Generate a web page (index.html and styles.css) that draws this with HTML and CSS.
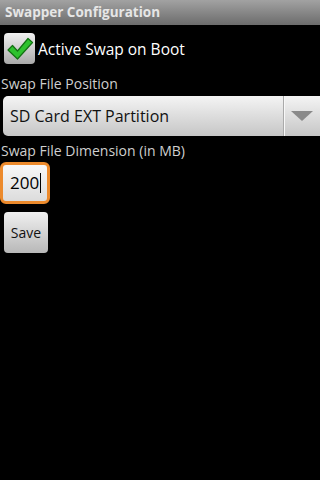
FILE: index.html
```html
<!DOCTYPE html>
<html lang="en">
<head>
    <meta charset="UTF-8">
    <meta name="viewport" content="width=device-width, initial-scale=1.0">
    <title>Swapper Configuration</title>
    <link rel="stylesheet" href="styles.css">
</head>
<body>
    <div class="titlebar">Swapper Configuration</div>
    <div class="content">
        <!-- Active swap on boot -->
        <div class="check-row">
            <span class="checkbox">
                <svg width="28" height="26" viewBox="0 0 28 26">
                    <path d="M2 14 L6.5 9.5 L11.5 15 L22 2.5 L26.5 6.5 L11.5 23 Z" fill="#2ec22e" stroke="#127012" stroke-width="1.2" stroke-linejoin="round"/>
                </svg>
            </span>
            <span class="check-label">Active Swap on Boot</span>
        </div>

        <!-- Swap file position -->
        <div class="field-label">Swap File Position</div>
        <div class="spinner">
            <span class="spinner-text">SD Card EXT Partition</span>
            <span class="spinner-arrow"><span class="triangle"></span></span>
        </div>

        <!-- Swap file dimension -->
        <div class="field-label">Swap File Dimension (in MB)</div>
        <div class="edit">200<span class="cursor"></span></div>

        <button class="save">Save</button>
    </div>
</body>
</html>
```

FILE: styles.css
```css
body {
    margin: 0;
    background-color: #000;
    font-family: "Open Sans", "DejaVu Sans", sans-serif;
    color: #fff;
}
.titlebar {
    height: 25px;
    line-height: 25px;
    padding-left: 5px;
    background: linear-gradient(#a2a2a2, #6c6c6c);
    color: #e6e6e6;
    font-weight: bold;
    font-size: 13.5px;
}
.content {
    padding: 8px 0 0 0;
}
.check-row {
    display: flex;
    align-items: center;
    height: 31px;
    padding-left: 4px;
}
.checkbox {
    width: 31px;
    height: 31px;
    box-sizing: border-box;
    border-radius: 4px;
    background: linear-gradient(#f2f2f2, #a9a9a9);
    display: flex;
    align-items: center;
    justify-content: center;
}
.check-label {
    margin-left: 3px;
    font-size: 15.5px;
}
.field-label {
    margin: 11px 0 0 1px;
    font-size: 14px;
    color: #cfcfcf;
    line-height: 18px;
}
.spinner {
    display: flex;
    align-items: center;
    height: 40px;
    margin: 3px -6px 0 3px;
    border-radius: 5px;
    background: linear-gradient(#f4f4f4, #c6c6c6);
    color: #111;
}
.spinner-text {
    flex: 1;
    padding-left: 7px;
    font-size: 16px;
}
.spinner-arrow {
    width: 43px;
    height: 100%;
    border-left: 1px solid #aaa;
    box-shadow: inset 1px 0 0 #f8f8f8;
    display: flex;
    align-items: center;
    padding-left: 7px;
    box-sizing: border-box;
}
.triangle {
    width: 0;
    height: 0;
    border-left: 11px solid transparent;
    border-right: 11px solid transparent;
    border-top: 10px solid #8a8a8a;
}
.spinner + .field-label {
    margin-top: 6px;
}
.edit {
    margin-top: 2px;
    width: 50px;
    height: 42px;
    box-sizing: border-box;
    border: 3px solid #ec8a2c;
    border-radius: 6px;
    background: linear-gradient(#f8f8f8, #dcdcdc);
    color: #000;
    font-size: 17px;
    line-height: 36px;
    padding-left: 7px;
    display: flex;
    align-items: center;
}
.cursor {
    display: inline-block;
    width: 1px;
    height: 20px;
    background-color: #000;
    margin-left: 1px;
}
.save {
    display: block;
    margin: 8px 0 0 4px;
    width: 44px;
    height: 41px;
    border: none;
    border-radius: 4px;
    background: linear-gradient(#f0f0f0, #b8b8b8);
    color: #111;
    font-family: "Open Sans", "DejaVu Sans", sans-serif;
    font-size: 14px;
    padding: 0;
}
```
